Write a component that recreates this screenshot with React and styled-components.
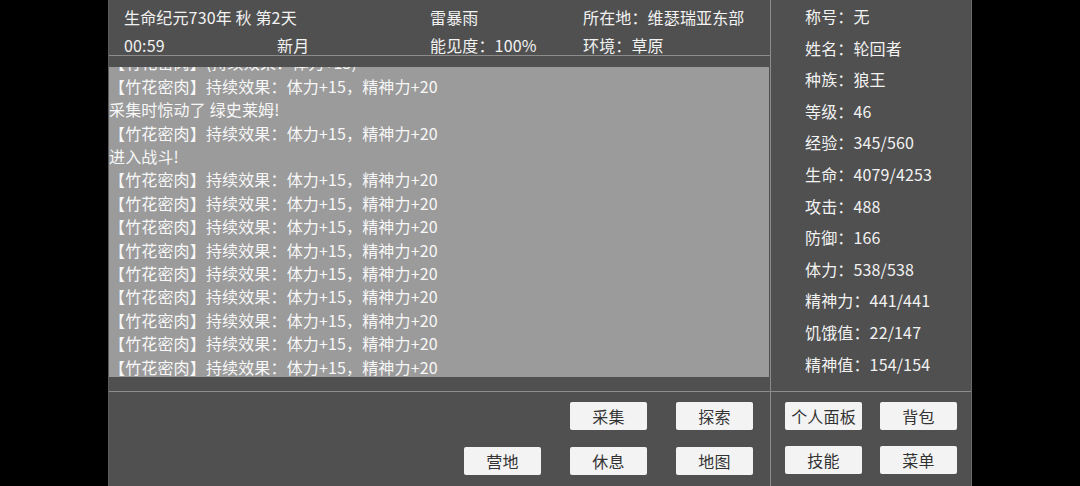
import React from 'react'
import styled, { createGlobalStyle } from 'styled-components'

const header = [
  ['生命纪元730年 秋 第2天', '', '雷暴雨', '所在地：维瑟瑞亚东部'],
  ['00:59', '新月', '能见度：100%', '环境：草原'],
]

const effect = '【竹花密肉】持续效果：体力+15，精神力+20'
const log = [
  '【竹花密肉】(持续效果：体力+15)',
  effect,
  '采集时惊动了 绿史莱姆!',
  effect,
  '进入战斗!',
  effect, effect, effect, effect, effect, effect, effect, effect, effect,
]

const stats = [
  ['称号', '无'],
  ['姓名', '轮回者'],
  ['种族', '狼王'],
  ['等级', '46'],
  ['经验', '345/560'],
  ['生命', '4079/4253'],
  ['攻击', '488'],
  ['防御', '166'],
  ['体力', '538/538'],
  ['精神力', '441/441'],
  ['饥饿值', '22/147'],
  ['精神值', '154/154'],
]

const App = () => {
  return (
    <>
      <Global />
      <Screen>
        <Frame>
          <Main>
            <Header>
              {header.map((row, i) =>
                row.map((cell, j) => <HeaderCell key={i + '-' + j}>{cell}</HeaderCell>)
              )}
            </Header>
            <Log>
              <LogBody>
                {log.map((line, i) => (
                  <LogLine key={i}>{line}</LogLine>
                ))}
              </LogBody>
            </Log>
          </Main>
          <Stats>
            {stats.map(([k, v]) => (
              <Stat key={k}>{k}：{v}</Stat>
            ))}
          </Stats>
          <Actions>
            <span />
            <Button>采集</Button>
            <Button>探索</Button>
            <Button>营地</Button>
            <Button>休息</Button>
            <Button>地图</Button>
          </Actions>
          <Menu>
            <Button>个人面板</Button>
            <Button>背包</Button>
            <Button>技能</Button>
            <Button>菜单</Button>
          </Menu>
        </Frame>
      </Screen>
    </>
  )
}

const Global = createGlobalStyle`
  html, body {
    margin: 0;
    background: #000;
  }
  body {
    font-family: "Noto Sans CJK SC", "Noto Sans", sans-serif;
    letter-spacing: 0.15px;
  }
`

const Screen = styled.div`
  display: flex;
  justify-content: center;
  height: 486px;
  overflow: hidden;
`

const Frame = styled.div`
  width: 864px;
  height: 486px;
  display: grid;
  grid-template-columns: 661px 1px 201px;
  grid-template-rows: 391px 95px;
  background: #505050;
  box-sizing: border-box;
  border-left: 1px solid #5c5c5c;
  border-right: 1px solid #6a6a6a;
  background-image:
    linear-gradient(#8c8c8c, #8c8c8c),
    linear-gradient(#8c8c8c, #8c8c8c);
  background-size: 1px 100%, 100% 1px;
  background-position: 661px 0, 0 391px;
  background-repeat: no-repeat;
  & > :nth-child(2) { grid-column: 3; }
  & > :nth-child(4) { grid-column: 3; }
`

const Main = styled.div`
  display: flex;
  flex-direction: column;
`

const Header = styled.div`
  display: grid;
  grid-template-columns: repeat(4, 153px);
  grid-auto-rows: 28px;
  padding: 3px 0 0 15px;
  height: 56px;
  box-sizing: border-box;
  border-bottom: 1px solid #8c8c8c;
  color: #f2f2f2;
  font-size: 16px;
`

const HeaderCell = styled.div`
  line-height: 28px;
  white-space: nowrap;
`

const Log = styled.div`
  margin-top: 11px;
  height: 310px;
  margin-right: 1px;
  background: #9b9b9b;
  display: flex;
  flex-direction: column;
  justify-content: flex-end;
  overflow: hidden;
`

const LogBody = styled.div`
  flex: none;
  margin-bottom: -2px;
`

const LogLine = styled.div`
  color: #f7f7f7;
  font-size: 16px;
  line-height: 23.4px;
  white-space: nowrap;
`

const Stats = styled.div`
  padding: 1px 0 0 34px;
  color: #f2f2f2;
  font-size: 16px;
`

const Stat = styled.div`
  line-height: 31.6px;
  white-space: nowrap;
`

const Button = styled.button`
  width: 77px;
  height: 28px;
  padding: 0;
  border: none;
  border-radius: 2px;
  background: #f3f3f3;
  color: #333;
  font-family: inherit;
  font-size: 16px;
  letter-spacing: inherit;
`

const Actions = styled.div`
  display: grid;
  grid-template-columns: repeat(3, 77px);
  grid-auto-rows: 28px;
  column-gap: 29px;
  row-gap: 17px;
  justify-content: end;
  padding: 11px 17px 0 0;
`

const Menu = styled.div`
  display: grid;
  grid-template-columns: repeat(2, 77px);
  grid-auto-rows: 28px;
  column-gap: 18px;
  row-gap: 16px;
  padding: 11px 0 0 14px;
`

export default App
